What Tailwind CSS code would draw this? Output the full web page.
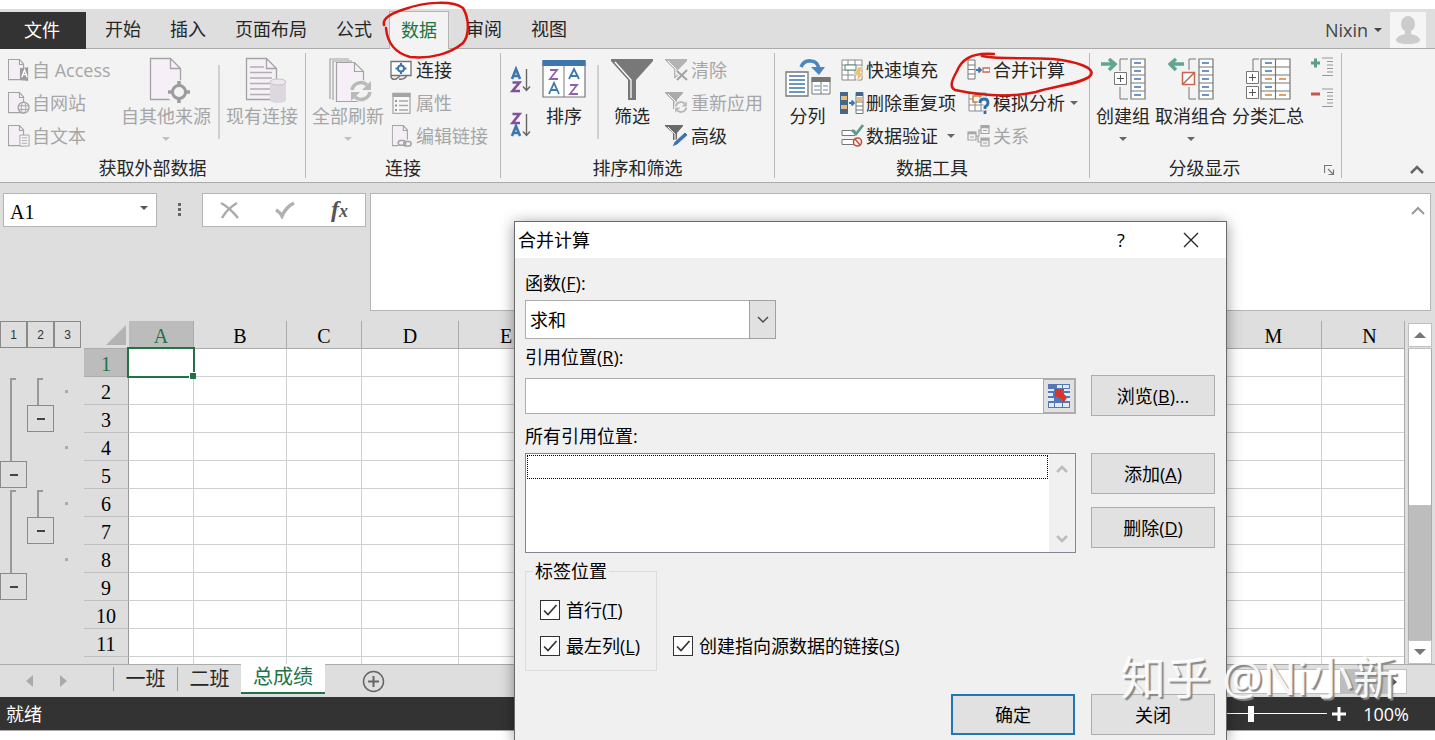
<!DOCTYPE html>
<html lang="zh-CN">
<head>
<meta charset="utf-8">
<title>合并计算</title>
<script src="https://cdn.jsdelivr.net/npm/@tailwindcss/browser@4"></script>
</head>
<body class="relative flex h-screen flex-col overflow-hidden bg-white font-['Open_Sans','Noto_Sans_CJK_SC',sans-serif] text-[18px] leading-[26px] text-[#262626]">
<svg class="hidden" aria-hidden="true">
  <defs>
    <symbol id="page" viewBox="0 0 24 24"><path d="M.5 .5h12l4.500 5v17H.5zM12.500 .5v5.500H17" fill="#f4eef6" stroke="#a3a3a3" stroke-width="1.200"/></symbol>
    <symbol id="bigpage" viewBox="0 0 34 44"><path d="M1.500 1.500h20l10 10v31h-30zM21.500 1.500v10h10" fill="#f6eff7" stroke="#a3a3a3" stroke-width="1.300"/></symbol>
    <symbol id="cycle" viewBox="0 0 24 24"><path d="M3 11a9 9 0 0 1 15-5M21 13a9 9 0 0 1-15 5" fill="none" stroke="#b9b9b9" stroke-width="3.500"/><path d="M22 2v9h-9zM2 22v-9h9z" fill="#b9b9b9"/></symbol>
    <symbol id="down" viewBox="0 0 8 4"><path d="M0 0h8L4 4z" fill="currentColor"/></symbol>
    <symbol id="check" viewBox="0 0 20 20"><path d="M4 10.500l4 4L16.500 5" fill="none" stroke="#333" stroke-width="1.700"/></symbol>
  </defs>
</svg>

<!-- Tab strip -->
<header class="mt-[9px] flex h-10 shrink-0 items-end border-b border-[#ababab] bg-[#dedede]">
  <button class="-mb-px h-[37px] w-[86px] bg-[#333] pr-[2px] pb-[2px] text-white">文件</button>
  <nav class="ml-[7px] flex h-[37px] items-stretch gap-[5px]">
    <button class="px-3 pb-[2px]">开始</button>
    <button class="px-3 pb-[2px]">插入</button>
    <button class="px-3 pb-[2px]">页面布局</button>
    <button class="px-3 pb-[2px]">公式</button>
    <button class="-mb-px border border-b-0 border-[#b5b5b5] bg-[#f3f3f3] px-[11px] pb-[2px] text-[#217346]">数据</button>
    <button class="px-3 pb-[2px]">审阅</button>
    <button class="px-3 pb-[2px]">视图</button>
  </nav>
  <button class="mr-2 ml-auto flex h-9 items-center gap-[6px] text-[#444]"><span>Nixin</span><svg class="h-1 w-2"><use href="#down"/></svg></button>
  <svg class="mr-[9px] size-9 bg-[#f5f5f5]" viewBox="0 0 36 36"><ellipse cx="18" cy="12" rx="7" ry="8" fill="#ccc"/><path d="M15 17h6v5q9 2 9 6t-12 4-12-4 9-6z" fill="#ccc"/></svg>
</header>

<!-- Ribbon -->
<section class="flex h-[134px] shrink-0 border-b border-[#ababab] bg-[#f3f3f3]">
  <div class="my-1 flex w-[306px] flex-col border-r border-[#b8b8b8]">
    <div class="flex h-[99px] text-[#a6a6a6]">
      <div class="ml-2 flex w-28 flex-col">
        <button class="flex h-[33px] items-center gap-[2px] whitespace-nowrap"><svg class="size-[22px]" viewBox="0 0 24 24"><use href="#page"/><path d="M13 10l9-1v15l-9-1z" fill="#9d9d9d"/><path d="M15 20l3-8 3 8M16 17h4" fill="none" stroke="#fff" stroke-width="1.500"/></svg>自 Access</button>
        <button class="flex h-[33px] items-center gap-[2px]"><svg class="size-[22px]" viewBox="0 0 24 24"><use href="#page"/><circle cx="17" cy="17" r="6" fill="#f3f3f3" stroke="#a3a3a3" stroke-width="1.400"/><ellipse cx="17" cy="17" rx="2.500" ry="6" fill="none" stroke="#a3a3a3"/><path d="M11 15h12M11 19h12" stroke="#a3a3a3"/></svg>自网站</button>
        <button class="flex h-[33px] items-center gap-[2px]"><svg class="size-[22px]" viewBox="0 0 24 24"><use href="#page"/><path d="M13 11h10v12H13z" fill="#f6f6f6" stroke="#a3a3a3"/><path d="M15 14h6M15 17h6M15 20h6" stroke="#a9a9a9"/></svg>自文本</button>
      </div>
      <button class="flex w-[92px] flex-col items-center pt-1"><svg class="h-[46px] w-[34px] overflow-visible" viewBox="0 0 34 46"><use href="#bigpage" width="34" height="44"/><circle cx="30" cy="35" r="12" fill="#f3f3f3"/><circle cx="30" cy="35" r="6.500" fill="none" stroke="#9c9c9c" stroke-width="3"/><path d="M30 24v5M30 41v5M19 35h5M36 35h5" stroke="#9c9c9c" stroke-width="3.500"/></svg><span>自其他来源</span><svg class="mt-[8px] h-1 w-2 text-[#c0c0c0]"><use href="#down"/></svg></button>
      <i class="mt-3 ml-[6px] h-[74px] w-[2px] bg-[#d0d0d0]"></i>
      <button class="flex w-[84px] flex-col items-center pt-1"><svg class="h-[46px] w-[34px] overflow-visible" viewBox="0 0 34 46"><use href="#bigpage" width="34" height="44"/><path d="M5 10h14M5 15.500h22M5 21h22M5 26.500h20M5 32h20M5 37.500h20" stroke="#b0b0b0" stroke-width="1.300"/><path d="M25 25v18c0 4 16 4 16 0V25z" fill="#dcd8dd"/><ellipse cx="33" cy="25" rx="8" ry="3" fill="#ece8ed" stroke="#c5c5c5"/></svg><span>现有连接</span></button>
    </div>
    <div class="shrink-0 text-center leading-8">获取外部数据</div>
  </div>

  <div class="my-1 flex w-[195px] flex-col border-r border-[#b8b8b8]">
    <div class="flex h-[99px] text-[#a6a6a6]">
      <button class="flex w-[84px] flex-col items-center pt-1"><svg class="h-[46px] w-[42px] overflow-visible" viewBox="0 0 42 46"><path d="M3 42V2h19M6 43V4h19" fill="none" stroke="#a3a3a3" stroke-width="1.200"/><path d="M9.500 5.500h18l9 9v30h-27zM27.500 5.500v9h9" fill="#f6eff7" stroke="#a3a3a3" stroke-width="1.200"/><circle cx="34" cy="34" r="11" fill="#f3f3f3"/><use href="#cycle" x="22" y="22" width="24" height="24"/></svg><span>全部刷新</span><svg class="mt-[8px] h-1 w-2 text-[#c0c0c0]"><use href="#down"/></svg></button>
      <div class="flex flex-col">
        <button class="flex h-[33px] items-center gap-[4px] text-[#262626]"><svg class="size-[22px]" viewBox="0 0 22 22"><path d="M1 16.500V2.500h20v14z" fill="#fff" stroke="#737373" stroke-width="1.300"/><circle cx="11" cy="9.500" r="3" fill="none" stroke="#3e76ae" stroke-width="2"/><path d="M11 4v3M11 12v3M5.500 9.500h3M13.500 9.500h3" stroke="#3e76ae" stroke-width="2"/><path d="M1 17q0 4 5 3l4-3M9 20q6 1 8-4" fill="none" stroke="#737373" stroke-width="1.500"/></svg>连接</button>
        <button class="flex h-[33px] items-center gap-[4px]"><svg class="size-[22px]" viewBox="0 0 22 22"><path d="M3 1.500h17v20H3z" fill="#faf7fa" stroke="#a9a9a9" stroke-width="1.300"/><path d="M2.500 1h18v4h-18z" fill="#a5a5a5"/><path d="M9 9h9M9 13.500h9M9 18h9" stroke="#a9a9a9" stroke-width="1.300"/><path d="M5 9h2M5 13.500h2M5 18h2" stroke="#999" stroke-width="2"/></svg>属性</button>
        <button class="flex h-[33px] items-center gap-[4px]"><svg class="size-[22px]" viewBox="0 0 24 24"><use href="#page" x="2"/><path d="M9 16h14v8H9z" fill="#f3f3f3"/><rect x="9" y="17" width="8" height="5" rx="2.500" fill="none" stroke="#a3a3a3" stroke-width="1.700"/><rect x="15" y="18" width="8" height="5" rx="2.500" fill="none" stroke="#a3a3a3" stroke-width="1.700"/></svg>编辑链接</button>
      </div>
    </div>
    <div class="shrink-0 text-center leading-8">连接</div>
  </div>

  <div class="my-1 flex w-[274px] flex-col border-r border-[#b8b8b8]">
    <div class="flex h-[99px]">
      <div class="ml-2 flex w-6 flex-col gap-4 pt-3">
        <button aria-label="升序"><svg class="block h-[30px] w-6" viewBox="0 0 24 30"><g fill="none" stroke-width="2.600"><path d="M3 14L7 4l4 10M4.500 11h5" stroke="#3e76ae"/><path d="M3.500 17.500h7L3.500 26h7.500" stroke="#8250a0"/><path d="M17.500 4v21M14 21.500l3.500 4 3.500-4" stroke="#666" stroke-width="1.400"/></g></svg></button>
        <button aria-label="降序"><svg class="block h-[30px] w-6" viewBox="0 0 24 30"><g fill="none" stroke-width="2.600"><path d="M3.500 3h7L3.500 12h7.500" stroke="#8250a0"/><path d="M3 25L7 15l4 10M4.500 22h5" stroke="#3e76ae"/><path d="M17.500 3v21M14 20.500l3.500 4 3.500-4" stroke="#666" stroke-width="1.400"/></g></svg></button>
      </div>
      <button class="flex w-[62px] flex-col items-center pt-1"><svg class="h-[46px] w-[44px]" viewBox="0 0 44 46"><path d="M1 4h42v36H1z" fill="#fff" stroke="#777" stroke-width="1.200"/><path d="M.5 3h43v6H.5z" fill="#3e76ae"/><path d="M22 9v31" stroke="#777"/><g fill="none" stroke-width="1.800"><path d="M8 13h7l-7 9h8M28 28h7l-7 9h8" stroke="#9060ac"/><path d="M7 37l5-11 5 11M9 33h6M27 22l5-10 5 10M29 19h6" stroke="#3e76ae"/></g></svg><span>排序</span></button>
      <i class="mt-3 ml-[2px] h-[74px] w-[2px] bg-[#d0d0d0]"></i>
      <button class="flex w-[66px] flex-col items-center pt-1"><svg class="h-[46px] w-[44px]" viewBox="0 0 44 46"><path d="M1 2h42v2L26 23v20h-8V23L1 4z" fill="#787878"/><path d="M5 5l16 18v18" fill="none" stroke="#fff" stroke-width="1.300"/></svg><span>筛选</span></button>
      <div class="flex flex-col text-[#a6a6a6]">
        <button class="flex h-[33px] items-center gap-[3px]"><svg class="size-[23px]" viewBox="0 0 23 23"><path d="M0 1h22v2l-8 8v9h-5v-9L0 2z" fill="#b3b3b3"/><path d="M3 3l8 8v7" fill="none" stroke="#fff"/><path d="M12 13l10 9M22 12L12 22" stroke="#f3f3f3" stroke-width="5"/><path d="M12 13l10 9M22 12L12 22" stroke="#a3a3a3" stroke-width="2"/></svg>清除</button>
        <button class="flex h-[33px] items-center gap-[3px]"><svg class="size-[23px]" viewBox="0 0 23 23"><path d="M0 1h18v1l-6 7v9H8v-8L0 2z" fill="#aaa"/><path d="M3 3l7 7v7" fill="none" stroke="#fff"/><circle cx="16" cy="16" r="7" fill="#f3f3f3"/><use href="#cycle" x="9" y="9" width="14" height="14"/></svg>重新应用</button>
        <button class="flex h-[33px] items-center gap-[3px] text-[#262626]"><svg class="size-[23px]" viewBox="0 0 23 23"><path d="M0 1h18v1l-6 7v7H8V9L0 2z" fill="#6a6a6a"/><path d="M3 3l7 7v7" fill="none" stroke="#fff"/><path d="M20 8l3 3-11 10-5 2 2-5z" fill="#3f72b5" stroke="#f3f3f3"/></svg>高级</button>
      </div>
    </div>
    <div class="shrink-0 text-center leading-8">排序和筛选</div>
  </div>

  <div class="my-1 flex w-[315px] flex-col border-r border-[#b8b8b8]">
    <div class="flex h-[99px]">
      <button class="flex w-[65px] flex-col items-center pt-1"><svg class="h-[46px] w-[46px]" viewBox="0 0 46 46"><path d="M1 15h22v24H1z" fill="#fff" stroke="#777" stroke-width="1.300"/><path d="M4 19h16M4 23h16M4 27h16M4 31h16M4 35h16" stroke="#3e76ae" stroke-width="1.300"/><path d="M27 21h18v16H27z" fill="#fff" stroke="#777"/><path d="M26.500 20h19v5h-19z" fill="#777"/><path d="M29 29h6M29 33h6M38 29h5M38 33h5" stroke="#5a8ab8"/><path d="M36 25v12" stroke="#777"/><path d="M16 10q3-7 10-6 7 0 8 9" fill="none" stroke="#4b87bd" stroke-width="3.500"/><path d="M26 10l8 8 6-8z" fill="#4b87bd"/></svg><span>分列</span></button>
      <div class="flex w-[126px] flex-col">
        <button class="flex h-[33px] items-center gap-[2px]"><svg class="size-6" viewBox="0 0 24 24"><path d="M2 2h20v20H2zM2 7h20M2 12h20M2 17h20M8 2v20M15 2v20" fill="#fff" stroke="#8a8a8a"/><path d="M5 7h11v5H5z" fill="#fff" stroke="#4a906f"/><path d="M18 9h5l-3 6h4l-8 9 2-7h-4z" fill="#efbf72" stroke="#f3f3f3" stroke-width=".6"/></svg>快速填充</button>
        <button class="flex h-[33px] items-center gap-[2px] whitespace-nowrap"><svg class="size-6" viewBox="0 0 24 24"><path d="M0 1h8v22H0z" fill="#44678e"/><path d="M1 5h6v4H1zM1 14h6v4H1z" fill="#e8bd74"/><path d="M16 1.500h7v21h-7z" fill="#fff" stroke="#777"/><path d="M16 1h7v4h-7z" fill="#44678e"/><path d="M17 6h5v4h-5z" fill="#e8bd74"/><path d="M16 11h7M16 15h7M16 19h7" stroke="#777"/><path d="M9 12h5M11.500 9.500L14 12l-2.500 2.500" fill="none" stroke="#3e76ae" stroke-width="1.800"/></svg>删除重复项</button>
        <button class="flex h-[33px] items-center gap-[2px] whitespace-nowrap"><svg class="size-6" viewBox="0 0 24 24"><path d="M2 6.500h13v5H2zM2 15.500h12v5H2z" fill="#fff" stroke="#777"/><path d="M12 6l4 4 7-9" fill="none" stroke="#5e9c8a" stroke-width="2.800"/><circle cx="17.500" cy="18" r="4" fill="#fff" stroke="#c4503c" stroke-width="1.600"/><path d="M15 15l5 6" stroke="#c4503c" stroke-width="1.500"/></svg>数据验证<svg class="ml-[7px] h-1 w-2 text-[#666]"><use href="#down"/></svg></button>
      </div>
      <div class="flex flex-col">
        <button class="flex h-[33px] items-center gap-[3px]"><svg class="size-6" viewBox="0 0 24 24"><path d="M2 2h7v19H2zM2 7h7M2 11.500h7M2 16h7" fill="#fff" stroke="#777"/><path d="M10 12h5M12.500 9.500L15 12l-2.500 2.500" fill="none" stroke="#3e76ae" stroke-width="1.800"/><path d="M17 10h7v4h-7z" fill="#fff" stroke="#c96a55" stroke-width="1.300"/></svg>合并计算</button>
        <button class="flex h-[33px] items-center gap-[3px] whitespace-nowrap"><svg class="size-6" viewBox="0 0 24 24"><path d="M3 2h17v18H3zM3 8h17M3 14h17M9 2v18M15 2v18" fill="#fff" stroke="#8a8a8a"/><path d="M7 5h7v6H7z" fill="#fff" stroke="#d07b35" stroke-width="1.500"/><path d="M14 12q0-4 4-4t4 4q0 2-3 4v3M19 20v3" fill="none" stroke="#f3f3f3" stroke-width="5"/><path d="M14 12q0-4 4-4t4 4q0 2-3 4v2M19 20v3" fill="none" stroke="#336daa" stroke-width="2.800"/></svg>模拟分析<svg class="ml-[2px] h-1 w-2 text-[#666]"><use href="#down"/></svg></button>
        <button class="flex h-[33px] items-center gap-[3px] text-[#a6a6a6]"><svg class="size-6" viewBox="0 0 24 24"><g fill="#f6f0f6" stroke="#a6a6a6" stroke-width="1.200"><path d="M10 12h3V6h2M12 12v6h3" fill="none"/><path d="M2 8h8v8H2zM15 1.500h8v8h-8zM15 14h8v8h-8z"/></g><path d="M2 9h8M15 3h8M15 15.500h8" stroke="#a6a6a6" stroke-width="2.500"/><path d="M4 13h4M17 6.500h4M17 19h4" stroke="#a6a6a6"/></svg>关系</button>
      </div>
    </div>
    <div class="shrink-0 text-center leading-8">数据工具</div>
  </div>

  <div class="my-1 flex w-[252px] flex-col border-r border-[#b8b8b8]">
    <div class="flex h-[99px] shrink-0">
      <button class="ml-1 flex w-[58px] flex-col items-center pt-1"><svg class="h-[46px] w-[46px]" viewBox="0 0 46 46"><path d="M1 7h12M9 2l6 5-6 6" fill="none" stroke="#63a591" stroke-width="3.500"/><path d="M28 2h-8v12M20 30v12h8" fill="none" stroke="#777"/><path d="M14.500 15.500h12v12h-12z" fill="#fff" stroke="#777"/><path d="M17 21.500h7M20.500 18v7" stroke="#555"/><path d="M31 2h14v40H31zM31 10h14M31 18h14M31 26h14M31 34h14" fill="#fff" stroke="#777" stroke-width="1.200"/><path d="M34 6h7M34 14h7M34 22h7M34 30h7M34 38h7" stroke="#3e76ae" stroke-width="1.300"/></svg><span class="whitespace-nowrap">创建组</span><svg class="mt-[8px] h-1 w-2 text-[#666]"><use href="#down"/></svg></button>
      <button class="flex w-[78px] flex-col items-center pt-1"><svg class="h-[46px] w-[46px]" viewBox="0 0 46 46"><path d="M3 7h13M8 2L2 7l6 6" fill="none" stroke="#63a591" stroke-width="3.500"/><path d="M28 2h-7v11M21 30v12h7" fill="none" stroke="#777"/><path d="M14.500 15.500h12v12h-12zM15 27l11-11" fill="#fff" stroke="#c96350" stroke-width="1.500"/><path d="M31 2h14v40H31zM31 10h14M31 18h14M31 26h14M31 34h14" fill="#fff" stroke="#777" stroke-width="1.200"/><path d="M34 6h7M34 14h7M34 22h7M34 30h7M34 38h7" stroke="#3e76ae" stroke-width="1.300"/></svg><span class="whitespace-nowrap">取消组合</span><svg class="mt-[8px] h-1 w-2 text-[#666]"><use href="#down"/></svg></button>
      <button class="flex w-[76px] flex-col items-center pt-1"><svg class="h-[46px] w-[46px]" viewBox="0 0 46 46"><path d="M14 2H8v12" fill="none" stroke="#777"/><path d="M1.500 14.500h12v12h-12zM1.500 29.500h12v12h-12z" fill="#fff" stroke="#777"/><path d="M4 20.500h7M7.500 17v7M4 35.500h7M7.500 32v7" stroke="#555"/><path d="M16 2h29v40H16zM16 10h29M16 18h29M16 26h29M16 34h29M30.500 2v40" fill="#fff" stroke="#777" stroke-width="1.200"/><path d="M20 6h7M20 14h7M20 30h7" stroke="#3e76ae" stroke-width="1.300"/><path d="M20 22h7M34 22h7M20 38h7M34 38h7" stroke="#cf8432" stroke-width="1.300"/></svg><span class="whitespace-nowrap">分类汇总</span></button>
      <div class="ml-1 flex flex-col gap-[11px] pt-1">
        <button aria-label="显示明细数据"><svg class="block h-5 w-6" viewBox="0 0 24 20"><path d="M1 6h9M5.500 1.500v9" stroke="#5f9e8b" stroke-width="3"/><path d="M12 1h11M17 4.500h6M17 8h6M17 11.500h6M17 15h6M12 18.500h11" stroke="#999"/></svg></button>
        <button aria-label="隐藏明细数据"><svg class="block h-5 w-6" viewBox="0 0 24 20"><path d="M1 6h9" stroke="#c4584a" stroke-width="3"/><path d="M12 1h11M17 4.500h6M17 8h6M17 11.500h6M17 15h6M12 18.500h11" stroke="#999"/></svg></button>
      </div>
    </div>
    <div class="flex h-8 shrink-0 items-center leading-8"><span class="flex-1 pr-[6px] pl-[1px] text-center">分级显示</span><button class="mt-1 mr-[6px]" aria-label="分级显示设置"><svg class="block size-[11px]" viewBox="0 0 11 11"><path d="M.5 8V.5H8M4 4l5 5M9.500 4.500v5h-5" fill="none" stroke="#777" stroke-width="1.200"/></svg></button></div>
  </div>
  <button class="mt-auto mr-[11px] mb-[7px] ml-auto" aria-label="折叠功能区"><svg class="block h-[10px] w-[14px]" viewBox="0 0 14 10"><path d="M1 8l6-6 6 6" fill="none" stroke="#666" stroke-width="2.500"/></svg></button>
</section>

<!-- Formula bar -->
<section class="flex h-[138px] shrink-0 items-start bg-[#dedede] pt-[10px] pl-[3px]">
  <div class="flex h-[34px] w-[154px] items-center border border-[#b5b5b5] bg-white pr-2">
    <input aria-label="名称框" value="A1" class="min-w-0 flex-1 pt-[3px] pl-[6px] font-['Liberation_Serif','Noto_Sans_CJK_SC',serif] text-[20px] text-black outline-none">
    <button aria-label="名称列表"><svg class="mb-1 h-1 w-2 text-[#555]"><use href="#down"/></svg></button>
  </div>
  <svg class="mx-5 mt-[9px] h-4 w-[5px]" viewBox="0 0 5 16"><path d="M1 1h3v3H1zM1 6h3v3H1zM1 11h3v3H1z" fill="#666"/></svg>
  <div class="flex h-[34px] w-[164px] items-center justify-between border border-[#b5b5b5] bg-white pr-[17px] pl-[17px]">
    <button aria-label="取消"><svg class="block size-[19px]" viewBox="0 0 19 19"><path d="M1 2q9 5 17 15M17 2Q7 8 2 17" fill="none" stroke="#aaa" stroke-width="2.400"/></svg></button>
    <button aria-label="输入"><svg class="block h-[18px] w-5" viewBox="0 0 20 18"><path d="M1 9q4 2 6 6Q11 6 19 2" fill="none" stroke="#b0b0b0" stroke-width="3.500"/></svg></button>
    <button aria-label="插入函数" class="font-['Liberation_Serif',serif] text-[24px] font-bold text-[#555] italic">f<span class="text-[18px]">x</span></button>
  </div>
  <div class="mr-1 ml-1 flex h-[118px] flex-1 items-start border border-[#b5b5b5] bg-white">
    <textarea aria-label="编辑栏" class="h-full flex-1 resize-none px-2 outline-none"></textarea>
    <button class="mt-3 mr-[5px]" aria-label="折叠编辑栏"><svg class="block h-[10px] w-[14px]" viewBox="0 0 14 10"><path d="M1 8l6-6 6 6" fill="none" stroke="#999" stroke-width="2"/></svg></button>
  </div>
</section>

<!-- Sheet -->
<main class="flex min-h-0 flex-1 bg-[#dedede]">
  <aside class="w-[84px] shrink-0 font-['Liberation_Sans',sans-serif]">
    <div class="flex h-7 text-[12px] leading-6 text-[#333]">
      <button class="h-[27px] w-[27px] border border-[#8a8a8a]">1</button>
      <button class="h-[27px] w-[27px] border border-[#8a8a8a]">2</button>
      <button class="h-[27px] w-[27px] border border-[#8a8a8a]">3</button>
    </div>
    <div class="grid auto-rows-[28px] grid-cols-[27px_27px_24px]">
      <i class="col-start-1 row-start-2 row-span-3 mt-px ml-[10px] w-[6px] border-t-2 border-l-2 border-[#999]"></i>
      <i class="col-start-2 row-start-2 mt-px ml-[10px] w-[6px] border-t-2 border-l-2 border-[#999]"></i>
      <i class="col-start-3 row-start-2 size-[3px] place-self-center bg-[#aaa]"></i>
      <button aria-label="折叠" class="col-start-2 row-start-3 flex size-[27px] items-center justify-center border border-[#8a8a8a]"><i class="h-[2px] w-2 bg-[#444]"></i></button>
      <i class="col-start-3 row-start-4 size-[3px] place-self-center bg-[#aaa]"></i>
      <button aria-label="折叠" class="col-start-1 row-start-5 flex size-[27px] items-center justify-center border border-[#8a8a8a]"><i class="h-[2px] w-2 bg-[#444]"></i></button>
      <i class="col-start-1 row-start-6 row-span-3 mt-px ml-[10px] w-[6px] border-t-2 border-l-2 border-[#999]"></i>
      <i class="col-start-2 row-start-6 mt-px ml-[10px] w-[6px] border-t-2 border-l-2 border-[#999]"></i>
      <i class="col-start-3 row-start-6 size-[3px] place-self-center bg-[#aaa]"></i>
      <button aria-label="折叠" class="col-start-2 row-start-7 flex size-[27px] items-center justify-center border border-[#8a8a8a]"><i class="h-[2px] w-2 bg-[#444]"></i></button>
      <i class="col-start-3 row-start-8 size-[3px] place-self-center bg-[#aaa]"></i>
      <button aria-label="折叠" class="col-start-1 row-start-9 flex size-[27px] items-center justify-center border border-[#8a8a8a]"><i class="h-[2px] w-2 bg-[#444]"></i></button>
    </div>
  </aside>
  <div class="min-w-0 flex-1 overflow-hidden border-r border-[#ababab]">
    <table class="w-full min-w-[1334px] table-fixed border-separate border-spacing-0 font-['Liberation_Serif',serif] text-[20px] leading-6 text-black">
      <colgroup id="cols"></colgroup>
      <thead><tr id="head"></tr></thead>
      <tbody id="rows"></tbody>
    </table>
  </div>
  <div class="flex w-[30px] flex-col pt-[2px] pr-[3px] pl-[3px]">
    <button aria-label="向上滚动" class="flex h-6 shrink-0 items-center justify-center border border-[#c0c0c0] bg-white"><svg class="h-[6px] w-3 rotate-180 text-[#777]" viewBox="0 0 8 4"><use href="#down"/></svg></button>
    <div class="mt-px flex-1 border-x border-[#ababab] bg-[#bdbdbd]"><div class="h-[54%] border-y border-[#c0c0c0] bg-white"></div></div>
    <button aria-label="向下滚动" class="flex h-6 shrink-0 items-center justify-center border border-[#c0c0c0] bg-white"><svg class="h-[6px] w-3 text-[#777]" viewBox="0 0 8 4"><use href="#down"/></svg></button>
  </div>
</main>

<!-- Sheet tabs -->
<section class="flex h-[33px] shrink-0 items-start border-t border-[#ababab] bg-[#dedede]">
  <button class="mt-[10px] ml-[26px]" aria-label="上一张"><svg class="block h-3 w-[7px]" viewBox="0 0 7 12"><path d="M7 0v12L0 6z" fill="#aaa"/></svg></button>
  <button class="mt-[10px] ml-[27px]" aria-label="下一张"><svg class="block h-3 w-[7px]" viewBox="0 0 7 12"><path d="M0 0v12l7-6z" fill="#aaa"/></svg></button>
  <nav class="ml-[46px] flex text-[20px] leading-[24px]">
    <button class="h-[28px] w-16 pt-[2px] pb-[2px]"><span class="block border-l border-[#999]">一班</span></button>
    <button class="h-[28px] w-16 pt-[2px] pb-[2px]"><span class="block border-l border-[#999]">二班</span></button>
    <button class="-mt-px h-[30px] w-[84px] border-b-2 border-[#217346] bg-white pb-[2px] text-[#217346]">总成绩</button>
  </nav>
  <button class="mt-[5px] ml-[37px]" aria-label="新工作表"><svg class="block size-[23px]" viewBox="0 0 23 23"><circle cx="11.500" cy="11.500" r="10" fill="none" stroke="#666" stroke-width="1.500"/><path d="M6 11.500h11M11.500 6v11" stroke="#666" stroke-width="2"/></svg></button>
  <div class="mt-1 mr-7 ml-auto flex h-[25px] w-[560px] border border-[#c0c0c0] bg-[#bdbdbd]"><div class="flex-1 bg-white"></div><button class="ml-[49px] flex w-[17px] items-center justify-center bg-white" aria-label="向右滚动"><svg class="mr-2 h-3 w-[7px]" viewBox="0 0 7 12"><path d="M0 0v12l7-6z" fill="#555"/></svg></button></div>
</section>

<!-- Status bar -->
<footer class="mb-[10px] flex h-[33px] shrink-0 items-center bg-[#333] px-[6px] text-white shadow-[0_1px_0_#aaa]">
  <span>就绪</span>
  <input type="range" aria-label="显示比例" min="10" max="190" value="100" class="ml-auto h-4 w-[152px] appearance-none bg-[linear-gradient(#fff,#fff)] bg-[length:100%_1px] bg-center bg-no-repeat [&::-webkit-slider-thumb]:h-4 [&::-webkit-slider-thumb]:w-[6px] [&::-webkit-slider-thumb]:appearance-none [&::-webkit-slider-thumb]:bg-white">
  <button class="ml-[5px]" aria-label="放大"><svg class="block size-[14px]" viewBox="0 0 14 14"><path d="M0 7h14M7 0v14" stroke="#fff" stroke-width="3"/></svg></button>
  <span class="mr-5 ml-[17px]">100%</span>
</footer>

<!-- Consolidate dialog -->
<div role="dialog" aria-labelledby="dlgtitle" class="absolute top-[221px] bottom-0 left-[514px] flex w-[713px] flex-col border border-b-0 border-[#6a6a6a] bg-[#f0f0f0] text-black shadow-[0_2px_14px_rgba(0,0,0,0.4)]">
  <div class="flex h-9 shrink-0 items-center bg-white pl-[3px]">
    <h1 id="dlgtitle" class="flex-1">合并计算</h1>
    <button class="w-[70px]">?</button>
    <button class="flex w-[70px] justify-center" aria-label="关闭窗口"><svg class="size-4" viewBox="0 0 16 16"><path d="M1 1l14 14M15 1L1 15" stroke="#222" stroke-width="1.300"/></svg></button>
  </div>
  <div class="flex flex-col pt-3 pr-[11px] pl-[10px]">
    <label for="fn">函数(<u>F</u>):</label>
    <div class="relative mt-1 h-[39px] w-[251px]">
      <select id="fn" class="size-full appearance-none border border-[#adadad] bg-white pl-1"><option>求和</option></select>
      <span class="pointer-events-none absolute inset-y-0 right-0 flex w-[27px] items-center justify-center border border-[#a0a0a0] bg-[#e1e1e1]"><svg class="h-[7px] w-3" viewBox="0 0 12 7"><path d="M1 1l5 5 5-5" fill="none" stroke="#444" stroke-width="1.300"/></svg></span>
    </div>
    <label for="ref" class="mt-[5px]">引用位置(<u>R</u>):</label>
    <div class="mt-[5px] flex items-center gap-[15px]">
      <div class="flex h-9 flex-1 border border-[#adadad] bg-white">
        <input id="ref" class="min-w-0 flex-1 px-1 outline-none">
        <button aria-label="选择区域" class="flex w-8 items-center justify-center border border-[#adadad] bg-[#e1e1e1]"><svg class="h-6 w-[22px]" viewBox="0 0 22 24"><path d="M0 0h22v24H0z" fill="#5577b8"/><path d="M9 1h5v3H9zM15 1h6v3h-6zM0 5h6v2H0zM0 9h5v3H0zM16 5h6v2h-6zM16 9h6v3h-6zM0 14h6v3H0zM17 14h5v3h-5zM1 19h5v4H1zM7 19h7v4H7zM15 19h6v4h-6z" fill="#e2ebf8"/><path d="M7 5h9l-2 3 4 4-1 2h2l-4 5-1-4-3-1-2-2-2 2z" fill="#dc3524"/></svg></button>
      </div>
      <button class="h-[41px] w-[124px] border border-[#adadad] bg-[#e1e1e1]">浏览(<u>B</u>)...</button>
    </div>
    <span id="alllabel" class="mt-[7px]">所有引用位置:</span>
    <div class="mt-1 flex gap-[15px]">
      <div role="listbox" aria-labelledby="alllabel" class="flex h-[100px] flex-1 border border-[#828790] bg-white">
        <div class="flex-1 p-px"><div role="option" class="h-6 border border-dotted border-black"></div></div>
        <div class="flex w-[26px] flex-col items-center justify-between bg-[#f0f0f0] pt-[11px] pb-[9px]">
          <svg class="h-2 w-3" viewBox="0 0 12 8"><path d="M1 7l5-5 5 5" fill="none" stroke="#bbb" stroke-width="2.500"/></svg>
          <svg class="h-2 w-3" viewBox="0 0 12 8"><path d="M1 1l5 5 5-5" fill="none" stroke="#bbb" stroke-width="2.500"/></svg>
        </div>
      </div>
      <div class="flex flex-col gap-[13px]">
        <button class="h-[41px] w-[124px] border border-[#adadad] bg-[#e1e1e1]">添加(<u>A</u>)</button>
        <button class="h-[41px] w-[124px] border border-[#adadad] bg-[#e1e1e1]">删除(<u>D</u>)</button>
      </div>
    </div>
    <div class="mt-[5px] flex items-end gap-4">
      <fieldset class="flex w-[132px] flex-col gap-[10px] border border-[#dcdcdc] pt-[13px] pb-[11px] pl-[14px]">
        <legend class="-ml-[7px] px-[2px]">标签位置</legend>
        <label class="flex items-center gap-[6px] whitespace-nowrap"><span class="relative size-5"><input type="checkbox" checked class="peer block size-5 appearance-none border border-[#333] bg-white"><svg class="pointer-events-none absolute inset-0 hidden size-5 peer-checked:block"><use href="#check"/></svg></span><span>首行(<u>T</u>)</span></label>
        <label class="flex items-center gap-[6px] whitespace-nowrap"><span class="relative size-5"><input type="checkbox" checked class="peer block size-5 appearance-none border border-[#333] bg-white"><svg class="pointer-events-none absolute inset-0 hidden size-5 peer-checked:block"><use href="#check"/></svg></span><span>最左列(<u>L</u>)</span></label>
      </fieldset>
      <label class="mb-3 flex items-center gap-[6px] whitespace-nowrap"><span class="relative size-5"><input type="checkbox" checked class="peer block size-5 appearance-none border border-[#333] bg-white"><svg class="pointer-events-none absolute inset-0 hidden size-5 peer-checked:block"><use href="#check"/></svg></span><span>创建指向源数据的链接(<u>S</u>)</span></label>
    </div>
    <div class="mt-[23px] flex justify-end gap-4">
      <button class="h-[41px] w-[124px] border-2 border-[#1f78b4] bg-[#e1e1e1]">确定</button>
      <button class="h-[41px] w-[124px] border border-[#adadad] bg-[#e1e1e1]">关闭</button>
    </div>
  </div>
</div>

<!-- Hand-drawn marks -->
<svg class="pointer-events-none absolute top-0 left-[380px] h-[62px] w-[92px]" viewBox="0 0 92 62"><path d="M4 25C2 18 12 13 25 9C45 2 72 0 83 8C90 20 89 36 83 43C70 54 50 59 30 57C12 52 7 40 6 28" fill="none" stroke="#d9150f" stroke-width="2.500" stroke-linecap="round"/></svg>
<svg class="pointer-events-none absolute top-[48px] left-[948px] h-[50px] w-[148px]" viewBox="0 0 148 50"><path d="M46 6C25 4 14 10 9 23C4 32 1 39 7 42C35 48 65 49 88 44C105 38 134 36 142 28C150 20 126 13 105 11C75 9 55 12 34 8" fill="none" stroke="#d9150f" stroke-width="2.500" stroke-linecap="round"/></svg>

<div class="pointer-events-none absolute right-[37px] bottom-[37px] text-[45px] leading-[50px] whitespace-nowrap text-white/90 [text-shadow:2px_2px_1px_#888]">知乎 @Ni小新</div>

<script>
  const widths = [45, 65, 93, 75, 97, 95, 96, 96, 96, 96, 96, 96, 96, 96, null];
  const letters = ['', ...'ABCDEFGHIJKLMN'];
  cols.innerHTML = widths.map(w => w ? `<col style="width:${w}px">` : '<col>').join('');
  head.innerHTML = letters.map((l, i) => i === 0
    ? '<th class="h-7 border-b border-[#ababab] p-0"><svg class="ml-[22px] block h-5 w-5" viewBox="0 0 20 20"><path d="M20 0v20H0z" fill="#b3b3b3"/></svg></th>'
    : i === 1
    ? '<th scope="col" class="h-7 border-r border-b border-[#ababab] bg-[#bcbcbc] p-0 pt-[3px] font-normal text-[#217346]">A</th>'
    : `<th scope="col" class="h-7 border-r border-b border-[#ababab] p-0 pt-[3px] font-normal">${l}</th>`).join('');
  let html = '';
  for (let r = 1; r <= 12; r++) {
    html += '<tr>' + (r === 1
      ? '<th scope="row" class="h-7 border-r border-b border-[#ababab] bg-[#bcbcbc] p-0 pt-[3px] font-normal text-[#217346]">1</th>'
      : `<th scope="row" class="h-7 border-r border-b border-r-[#999] border-b-[#c0c0c0] p-0 pt-[3px] font-normal">${r < 12 ? r : ''}</th>`);
    for (let c = 1; c < letters.length; c++) {
      html += r === 1 && c === 1
        ? '<td class="relative h-7 border-r border-b border-[#d0d0d0] bg-white p-0"><i class="absolute -inset-x-[2px] -top-[2px] -bottom-[2px] border-2 border-[#217346]"></i><i class="absolute -right-[3px] -bottom-[3px] size-[7px] border-t border-l border-white bg-[#217346]"></i></td>'
        : '<td class="h-7 border-r border-b border-[#d0d0d0] bg-white p-0"></td>';
    }
    html += '</tr>';
  }
  rows.innerHTML = html;
</script>
</body>
</html>
